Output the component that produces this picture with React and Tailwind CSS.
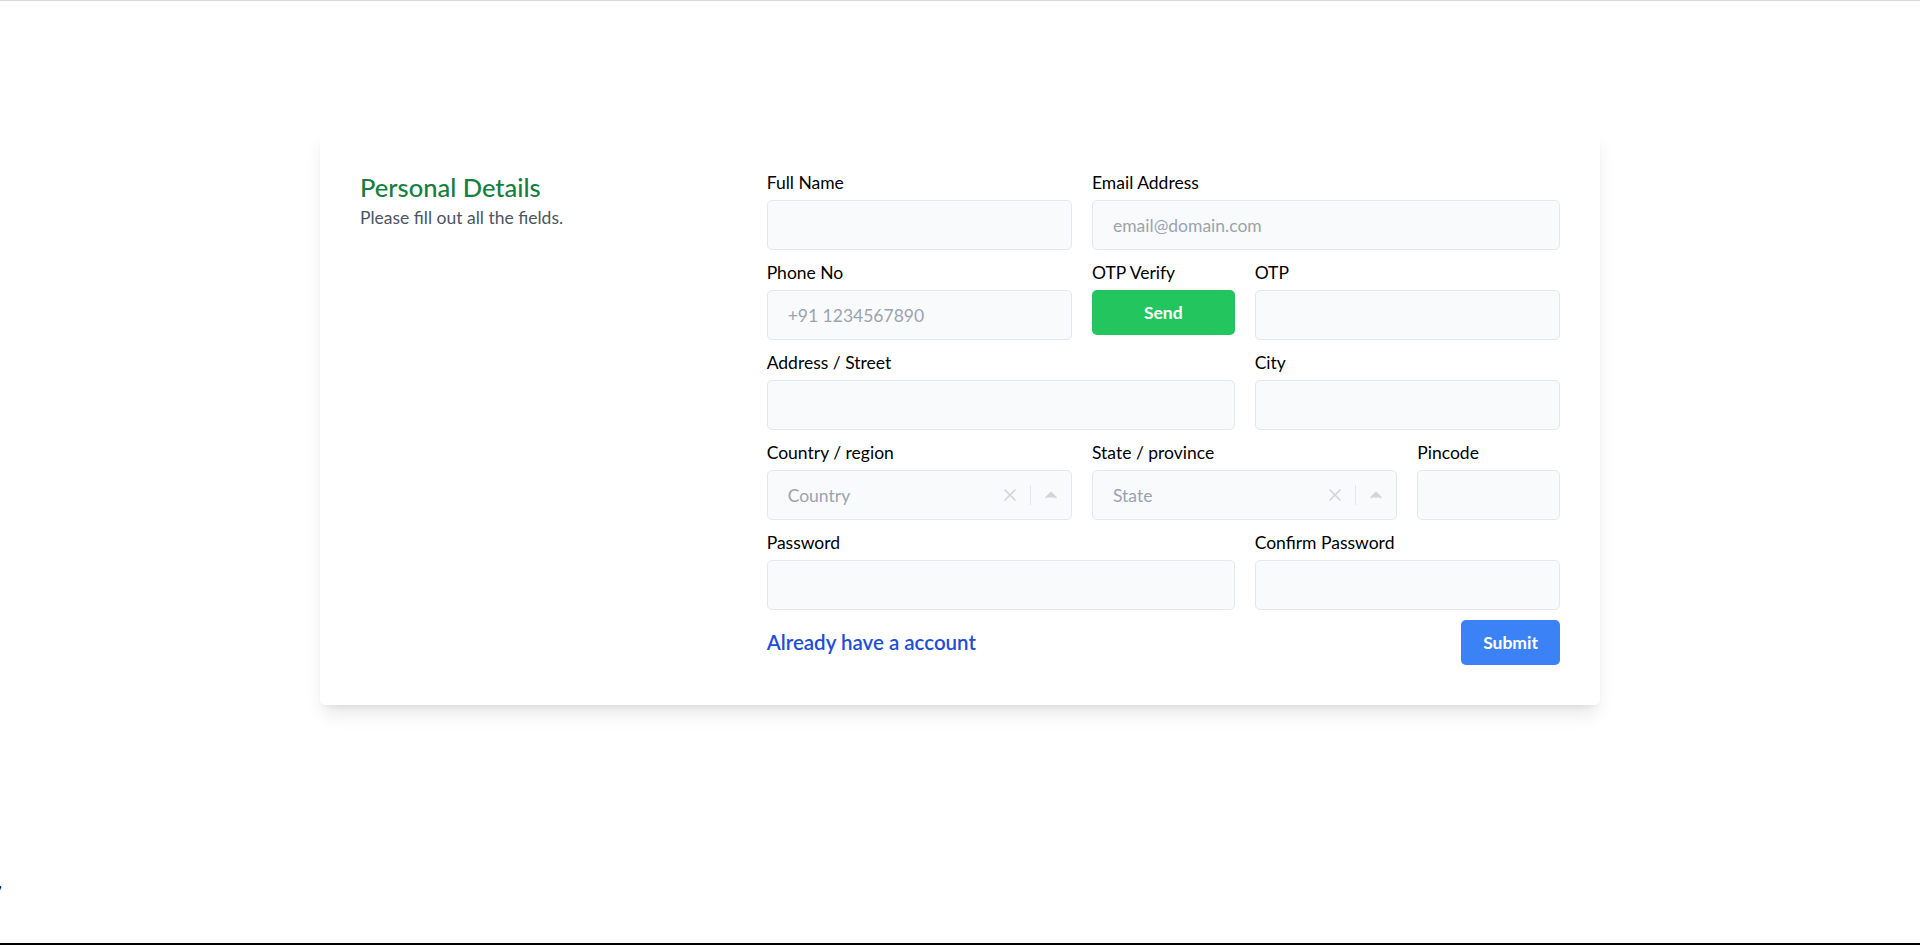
import React from "react";

const inputCls =
  "h-[50px] mt-[5px] w-full rounded-[5px] border border-[#e5e7eb] bg-[#f9fafb] px-5 text-[17.5px] text-[#1f2937] placeholder-[#9ca3af] outline-none";

const Field = ({ label, span, placeholder, type = "text" }) => (
  <div className={span}>
    <label className="block">{label}</label>
    <input type={type} placeholder={placeholder} className={inputCls} />
  </div>
);

const SelectBox = ({ label, span, placeholder }) => (
  <div className={span}>
    <label className="block">{label}</label>
    <div className="h-[50px] mt-[5px] flex items-center rounded-[5px] border border-[#e5e7eb] bg-[#f9fafb]">
      <input
        placeholder={placeholder}
        className="w-full min-w-0 bg-transparent px-5 text-[17.5px] text-[#1f2937] placeholder-[#9ca3af] outline-none"
      />
      <button className="text-[#d1d5db] cursor-pointer">
        <svg className="w-5 h-5 mx-[10px]" viewBox="0 0 24 24" fill="none" stroke="currentColor" strokeWidth="2" strokeLinecap="round" strokeLinejoin="round">
          <line x1="18" y1="6" x2="6" y2="18" />
          <line x1="6" y1="6" x2="18" y2="18" />
        </svg>
      </button>
      <button className="text-[#d1d5db] border-l border-[#e5e7eb] cursor-pointer">
        <svg className="w-5 h-5 mx-[10px] fill-current" viewBox="0 0 24 24" stroke="currentColor" strokeWidth="2" strokeLinecap="round" strokeLinejoin="round">
          <polyline points="18 15 12 9 6 15" />
        </svg>
      </button>
    </div>
  </div>
);

export default function App() {
  return (
    <div className="h-[945px] flex flex-col bg-white border-t border-[#d9d9d9] text-black font-['Lato',sans-serif]">
      <div className="w-[1280px] mx-auto pt-[129px]">
        <div className="bg-white rounded-[5px] p-10 shadow-[0_12px_19px_-4px_rgba(0,0,0,0.1),0_5px_8px_-5px_rgba(0,0,0,0.1)]">
          <div className="grid grid-cols-3 gap-x-5 gap-y-[10px] text-[17.5px] leading-[25px]">
            <div className="text-[#4b5563]">
              <p className="text-[25.5px] leading-[35px] font-medium text-[#15803d]">Personal Details</p>
              <p>Please fill out all the fields.</p>
            </div>

            <div className="col-span-2">
              <div className="grid grid-cols-5 gap-x-5 gap-y-[10px]">
                <Field label="Full Name" span="col-span-2" />
                <Field label="Email Address" span="col-span-3" placeholder="email@domain.com" />

                <Field label="Phone No" span="col-span-2" placeholder="+91 1234567890" />
                <div className="col-span-1">
                  <label className="block">OTP Verify</label>
                  <button className="mt-[5px] w-full rounded-[5px] bg-[#22c55e] py-[10px] font-bold text-white">
                    Send
                  </button>
                </div>
                <Field label="OTP" span="col-span-2" />

                <Field label="Address / Street" span="col-span-3" />
                <Field label="City" span="col-span-2" />

                <SelectBox label="Country / region" span="col-span-2" placeholder="Country" />
                <SelectBox label="State / province" span="col-span-2" placeholder="State" />
                <Field label="Pincode" span="col-span-1" />

                <Field label="Password" span="col-span-3" type="password" />
                <Field label="Confirm Password" span="col-span-2" type="password" />

                <div className="col-span-5 flex items-center justify-between">
                  <a href="#" className="text-[20.5px] font-semibold text-[#1d4ed8]">
                    Already have a account
                  </a>
                  <button className="rounded-[5px] bg-[#3b82f6] px-[22px] py-[10px] font-bold text-white">
                    Submit
                  </button>
                </div>
              </div>
            </div>
          </div>
        </div>
      </div>

      <div className="mt-auto mb-[49px] -ml-[2px] text-[17.5px] leading-[25px]">,</div>
      <div className="h-[2px] bg-black" />
    </div>
  );
}
